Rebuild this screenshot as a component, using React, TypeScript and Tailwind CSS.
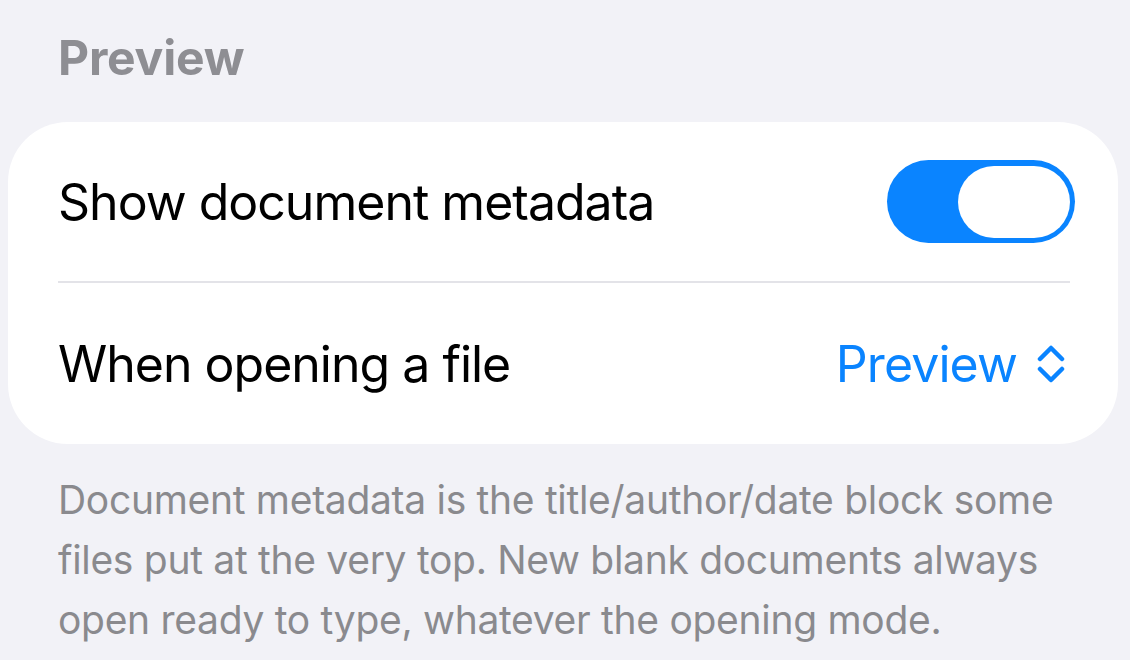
export default function App() {
  return (
    <div
      className="w-[1130px] h-[660px] overflow-hidden bg-[#f2f2f7]"
      style={{ fontFamily: "Inter, 'Noto Sans', sans-serif" }}
    >
      {/* section header */}
      <div className="pt-[34px] pl-[58px]">
        <h2 className="text-[48px] leading-none font-bold text-[#8e8e93] blur-[0.7px] tracking-[-0.2px]">
          Preview
        </h2>
      </div>

      {/* grouped card */}
      <div className="mt-[40px] ml-[8px] mr-[12px] bg-white rounded-[60px] pl-[50px] pr-[43px]">
        <div className="h-[159px] flex items-center justify-between">
          <span className="text-[50px] leading-none text-black tracking-[-1px]">
            Show document metadata
          </span>
          <Toggle />
        </div>
        <div className="h-[2px] bg-[#e3e3e8] mr-[5px]" />
        <div className="h-[161px] flex items-center justify-between pr-[10px]">
          <span className="text-[50px] leading-none text-black tracking-[-1px]">
            When opening a file
          </span>
          <button className="flex items-center gap-[20px] text-[#0a84ff]">
            <span className="text-[50px] leading-none tracking-[-0.9px]">Preview</span>
            <svg width="28" height="38" viewBox="0 0 28 38" fill="none">
              <path
                d="M3 14 L14 3 L25 14"
                stroke="#0a84ff"
                strokeWidth="4.5"
                strokeLinecap="round"
                strokeLinejoin="round"
              />
              <path
                d="M3 24 L14 35 L25 24"
                stroke="#0a84ff"
                strokeWidth="4.5"
                strokeLinecap="round"
                strokeLinejoin="round"
              />
            </svg>
          </button>
        </div>
      </div>

      {/* footer note */}
      <p className="mt-[26px] pl-[58px] text-[39px] leading-[60px] text-[#8a8a8e] tracking-[-0.3px]">
        Document metadata is the title/author/date block some
        <br />
        files put at the very top. New blank documents always
        <br />
        open ready to type, whatever the opening mode.
      </p>
    </div>
  );
}

function Toggle() {
  return (
    <div className="w-[188px] h-[83px] rounded-full bg-[#0a84ff] flex items-center justify-end pr-[5px]">
      <div className="w-[112px] h-[72px] rounded-full bg-white" />
    </div>
  );
}
